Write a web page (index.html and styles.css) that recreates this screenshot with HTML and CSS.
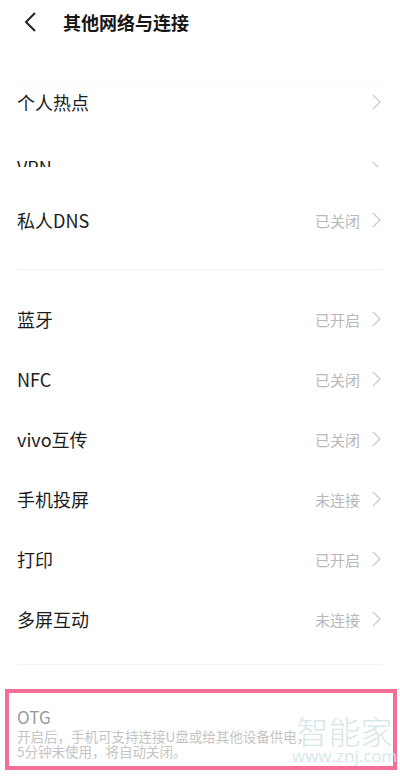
FILE: index.html
```html
<!DOCTYPE html>
<html>
	<head>
		<meta charset="UTF-8">
		<title>其他网络与连接</title>
		<link rel="stylesheet" href="styles.css">
	</head>
	<body>
		<div class="top">
			<svg class="back" width="14" height="22" viewBox="0 0 14 22"><path d="M12 2 L3 11 L12 20" fill="none" stroke="#222" stroke-width="2"/></svg>
			<h1>其他网络与连接</h1>
		</div>
		<div class="group first">
			<div class="row short"><span class="name">个人热点</span><i class="arrow"><svg width="9" height="16" viewBox="0 0 9 16"><path d="M1 1 L8 8 L1 15" fill="none" stroke="#ccc" stroke-width="1.4"/></svg></i></div>
			<div class="row cut"><span class="name">VPN</span><i class="arrow"><svg width="9" height="16" viewBox="0 0 9 16"><path d="M1 1 L8 8 L1 15" fill="none" stroke="#ccc" stroke-width="1.4"/></svg></i></div>
			<div class="row dns"><span class="name">私人DNS</span><span class="state">已关闭</span><i class="arrow"><svg width="9" height="16" viewBox="0 0 9 16"><path d="M1 1 L8 8 L1 15" fill="none" stroke="#ccc" stroke-width="1.4"/></svg></i></div>
		</div>
		<div class="group second">
			<div class="row"><span class="name">蓝牙</span><span class="state">已开启</span><i class="arrow"><svg width="9" height="16" viewBox="0 0 9 16"><path d="M1 1 L8 8 L1 15" fill="none" stroke="#ccc" stroke-width="1.4"/></svg></i></div>
			<div class="row"><span class="name">NFC</span><span class="state">已关闭</span><i class="arrow"><svg width="9" height="16" viewBox="0 0 9 16"><path d="M1 1 L8 8 L1 15" fill="none" stroke="#ccc" stroke-width="1.4"/></svg></i></div>
			<div class="row"><span class="name">vivo互传</span><span class="state">已关闭</span><i class="arrow"><svg width="9" height="16" viewBox="0 0 9 16"><path d="M1 1 L8 8 L1 15" fill="none" stroke="#ccc" stroke-width="1.4"/></svg></i></div>
			<div class="row"><span class="name">手机投屏</span><span class="state">未连接</span><i class="arrow"><svg width="9" height="16" viewBox="0 0 9 16"><path d="M1 1 L8 8 L1 15" fill="none" stroke="#ccc" stroke-width="1.4"/></svg></i></div>
			<div class="row"><span class="name">打印</span><span class="state">已开启</span><i class="arrow"><svg width="9" height="16" viewBox="0 0 9 16"><path d="M1 1 L8 8 L1 15" fill="none" stroke="#ccc" stroke-width="1.4"/></svg></i></div>
			<div class="row"><span class="name">多屏互动</span><span class="state">未连接</span><i class="arrow"><svg width="9" height="16" viewBox="0 0 9 16"><path d="M1 1 L8 8 L1 15" fill="none" stroke="#ccc" stroke-width="1.4"/></svg></i></div>
		</div>
		<div class="otg">
			<p class="otg_name">OTG</p>
			<p class="otg_desc">开启后，手机可支持连接U盘或给其他设备供电，<br/>5分钟未使用，将自动关闭。</p>
			<div class="mark">
				<em>智能家</em>
				<span>www.znj.com</span>
			</div>
		</div>
	</body>
</html>
```
FILE: styles.css
```css
*{
	margin:0;
	padding:0;
}
body{
	width:400px;
	height:777px;
	overflow:hidden;
	background:#fff;
	font-family:"Noto Sans CJK SC","Noto Sans",sans-serif;
	color:#1c1c1c;
}
.top{
	height:44px;
	display:flex;
	align-items:center;
	padding-left:23px;
}
.back{
	display:block;
}
.top h1{
	font-size:18px;
	font-weight:700;
	margin-left:26px;
	color:#161616;
}
.group{
	margin:0 17px;
}
.first{
	margin-top:39px;
	border-top:1px solid #fbfbfb;
	padding-bottom:19px;
	border-bottom:1px solid #f2f2f2;
}
.row{
	height:60px;
	display:flex;
	align-items:center;
	padding-right:2px;
	font-size:18px;
}
.row .name{
	flex:1;
	line-height:24px;
}
.state{
	font-size:15px;
	color:#b8b8b8;
	margin-right:12px;
}
.arrow svg{
	display:block;
}
.short{
	height:36px;
}
.cut{
	height:47px;
	align-items:flex-start;
	padding-top:35px;
	box-sizing:border-box;
	overflow:hidden;
}
.cut .name{
	height:12px;
	overflow:hidden;
}
.cut .arrow{
	height:6px;
	overflow:hidden;
	margin-top:6px;
}
.dns{
	margin-top:23px;
}
.second{
	padding:19px 0 15px;
	border-bottom:1px solid #f2f2f2;
}
.otg{
	position:relative;
	margin:24px 3px 0 5px;
	height:81px;
	box-sizing:border-box;
	border:4px solid #f46f96;
	padding:12px 0 0 8px;
}
.otg_name{
	font-size:17px;
	line-height:24px;
	color:#9a9a9a;
}
.otg_desc{
	font-size:13.5px;
	line-height:15px;
	color:#c4c4c4;
}
.mark{
	position:absolute;
	left:283px;
	top:21px;
	display:flex;
	flex-direction:column;
	align-items:center;
	color:#d2e6e6;
	opacity:.9;
}
.mark em{
	font-style:normal;
	font-size:32px;
	font-weight:300;
	line-height:33px;
}
.mark span{
	font-family:"Open Sans",sans-serif;
	font-size:17px;
	line-height:17px;
}
```
